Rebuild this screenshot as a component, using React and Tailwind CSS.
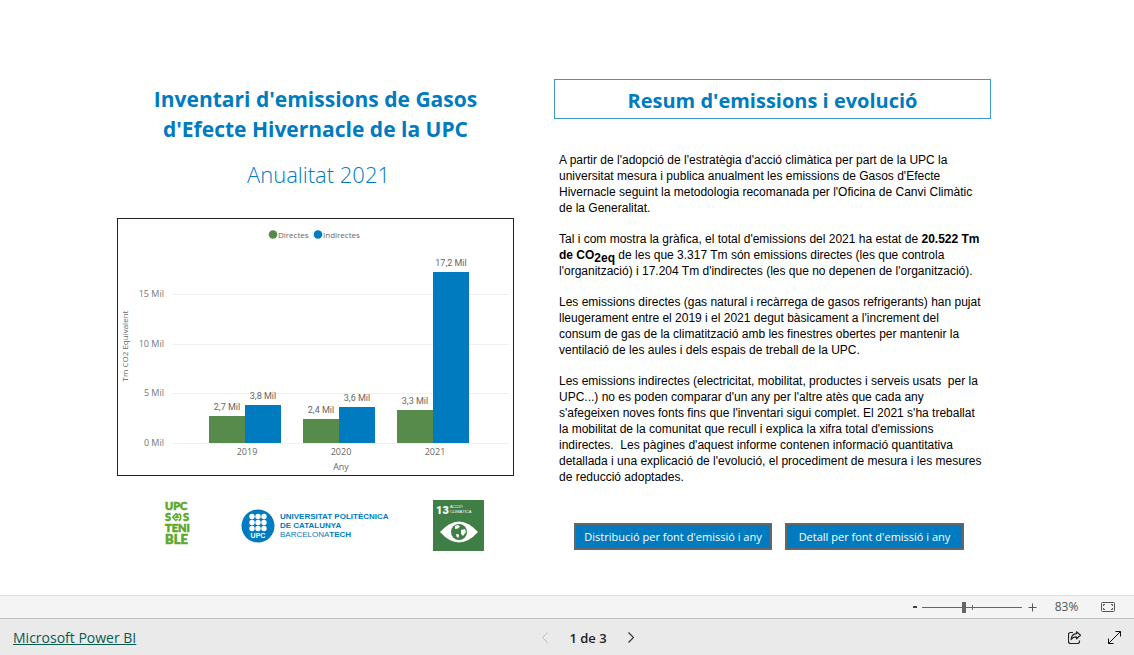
import { useState } from "react";

const SEGOE = "font-['Open_Sans','Noto_Sans',sans-serif]";

const years = [
  { year: "2019", x: 91, direct: { h: 27, label: "2,7 Mil" }, indirect: { h: 38, label: "3,8 Mil" } },
  { year: "2020", x: 185, direct: { h: 24, label: "2,4 Mil" }, indirect: { h: 36, label: "3,6 Mil" } },
  { year: "2021", x: 279, direct: { h: 33, label: "3,3 Mil" }, indirect: { h: 171, label: "17,2 Mil" } },
];

const ticks = [
  { y: 76, label: "15 Mil" },
  { y: 126, label: "10 Mil" },
  { y: 175, label: "5 Mil" },
  { y: 225, label: "0 Mil" },
];

function EmissionsChart() {
  return (
    <figure className="mt-[29px] border border-[#222]">
      <svg viewBox="0 0 395 256" className="block w-full fill-[#666] font-['Open_Sans',sans-serif] text-[9px]" role="img" aria-label="Emissions directes i indirectes per any">
        <circle cx="155" cy="15.5" r="4.3" fill="#568B4B" />
        <text x="160" y="19" className="text-[8px]">Directes</text>
        <circle cx="200" cy="15.5" r="4.3" fill="#007BC0" />
        <text x="205" y="19" className="text-[8px]">Indirectes</text>
        {ticks.map((t) => (
          <g key={t.label}>
            <path d={`M54 ${t.y - 0.5}H391`} stroke="#f0f0f0" />
            <text x="46" y={t.y + 2} textAnchor="end" fill="#777">{t.label}</text>
          </g>
        ))}
        {years.map((d) => (
          <g key={d.year}>
            <rect x={d.x} y={224 - d.direct.h} width="36" height={d.direct.h} fill="#568B4B" />
            <rect x={d.x + 36} y={224 - d.indirect.h} width="36" height={d.indirect.h} fill="#007BC0" />
            <g className="font-['Roboto',sans-serif]" textAnchor="middle">
              <text x={d.x + 18} y={218 - d.direct.h}>{d.direct.label}</text>
              <text x={d.x + 54} y={218 - d.indirect.h}>{d.indirect.label}</text>
            </g>
            <text x={d.x + 38} y="236" textAnchor="middle">{d.year}</text>
          </g>
        ))}
        <text x="223" y="251" textAnchor="middle">Any</text>
        <text transform="translate(10 127) rotate(-90)" textAnchor="middle" className="text-[8px]">Tm CO2 Equivalent</text>
      </svg>
    </figure>
  );
}

function SostenibleLogo() {
  return (
    <svg width="28" height="51" viewBox="0 0 28 51" className="overflow-visible fill-[#5BA829] stroke-[#5BA829] font-['Lato',sans-serif] text-[11px] font-black" strokeWidth="0.6" role="img" aria-label="UPC Sostenible">
      <text x="1" y="10">UPC</text>
      <text x="1" y="21">S</text>
      <path d="M12 13.5 8.8 17.2l3 3.3 1.8-1.5M12 13.5l1.8 1.6-2 2.1h3.400M14.500 13.800c3 .500 3 6.200 0 6.800" fill="none" strokeWidth="1.5" />
      <text x="19" y="21">S</text>
      <text x="1" y="32">TENI</text>
      <text x="1" y="44" className="text-[13px]">BLE</text>
    </svg>
  );
}

function UpcLogo() {
  return (
    <svg width="152" height="34" viewBox="0 0 152 34" className="ml-[9px] fill-[#007BC0] font-['Liberation_Sans',sans-serif] text-[8px]" role="img" aria-label="Universitat Politècnica de Catalunya BarcelonaTech">
      <circle cx="17" cy="17" r="16.5" />
      {[7.5, 13.5, 19.5].map((y) =>
        [11, 17, 23].map((x) => <circle key={`${x}-${y}`} cx={x} cy={y} r="2.7" fill="#fff" />)
      )}
      <text x="17" y="29" textAnchor="middle" fill="#fff" className="text-[7px] font-bold">UPC</text>
      <text x="39" y="10" className="font-bold">UNIVERSITAT POLITÈCNICA</text>
      <text x="39" y="19" className="font-bold">DE CATALUNYA</text>
      <text x="39" y="28">BARCELONA<tspan className="font-bold">TECH</tspan></text>
    </svg>
  );
}

function ClimateLogo() {
  return (
    <svg width="51" height="51" viewBox="0 0 51 51" className="font-['Liberation_Sans',sans-serif]" role="img" aria-label="13 Acció climàtica">
      <rect width="51" height="51" fill="#3F7E44" />
      <g fill="#fff">
        <text x="3" y="14" className="font-['Roboto',sans-serif] text-[11px] font-black">13</text>
        <text x="17" y="8" className="text-[4px]">ACCIÓ</text>
        <text x="17" y="13" className="text-[4px]">CLIMÀTICA</text>
        <path d="M7 32Q26 11 45 32Q26 53 7 32Z" />
      </g>
      <circle cx="26" cy="32" r="8" fill="#3F7E44" />
      <path d="M22 26l3-1 2 1.5-2 2-3 .5zM28 30l4-1 1 3-3 4-2-2zM23 34l3 .5-.5 3.5-2-1.5z" fill="#fff" />
    </svg>
  );
}

function ReportButton({ children, className }) {
  return (
    <button type="button" className={`${SEGOE} h-[27px] border-2 border-[#666] bg-[#007BC0] text-[11px] leading-4 whitespace-nowrap text-white ${className}`}>
      {children}
    </button>
  );
}

function ZoomBar() {
  const [zoom, setZoom] = useState(83);
  return (
    <div className="flex h-[24px] shrink-0 items-center justify-end border-y border-t-[#dedede] border-b-[#c0c0c0] bg-[#f4f4f4] pr-[19px] text-[#555]">
      <button type="button" aria-label="Allunya" className="grid h-5 w-[14px] place-items-center">
        <svg width="4" height="2"><path d="M0 1H4" stroke="#444" strokeWidth="2" /></svg>
      </button>
      <div className="relative flex h-5 w-[100px] items-center">
        <span className="absolute top-[8px] left-1/2 h-[5px] w-px bg-[#666]" />
        <input
          type="range"
          min="0"
          max="200"
          value={zoom}
          onChange={(e) => setZoom(Number(e.target.value))}
          aria-label="Zoom"
          className="relative h-[11px] w-full appearance-none bg-transparent [&::-webkit-slider-runnable-track]:h-[11px] [&::-webkit-slider-runnable-track]:bg-[linear-gradient(#666,#666)] [&::-webkit-slider-runnable-track]:bg-[length:100%_1px] [&::-webkit-slider-runnable-track]:bg-center [&::-webkit-slider-runnable-track]:bg-no-repeat [&::-webkit-slider-thumb]:h-[11px] [&::-webkit-slider-thumb]:w-[4px] [&::-webkit-slider-thumb]:appearance-none [&::-webkit-slider-thumb]:bg-[#666]"
        />
      </div>
      <button type="button" aria-label="Apropa" className="grid h-5 w-5 place-items-center">
        <svg width="9" height="9"><path d="M.5 4.5H8.5M4.5 .5V8.5" stroke="#555" /></svg>
      </button>
      <output className="w-[49px] text-center text-xs leading-4">{zoom}%</output>
      <button type="button" aria-label="Ajusta a la pàgina" className="ml-[10px]">
        <svg width="14" height="10" viewBox="0 0 14 10" fill="none" stroke="#555">
          <rect x=".5" y=".5" width="13" height="9" rx="1" />
          <path d="M2.5 4V2.5H4M10 2.5H11.5V4M11.5 6V7.5H10M4 7.5H2.5V6" />
        </svg>
      </button>
    </div>
  );
}

function Footer() {
  return (
    <footer className="grid h-[37px] shrink-0 grid-cols-3 items-center bg-[#eaeaea] px-[13px]">
      <a href="https://powerbi.microsoft.com" className="justify-self-start text-sm leading-5 text-[#0b5a50] underline">Microsoft Power BI</a>
      <nav aria-label="Pàgines" className="mr-[-42px] flex items-center justify-center">
        <button type="button" disabled aria-label="Pàgina anterior">
          <svg width="6" height="11" viewBox="0 0 6 11" fill="none" stroke="#bbb"><path d="M5.5 .5 .5 5.5 5.5 10.5" /></svg>
        </button>
        <span className="w-[80px] text-center text-[13px] leading-5 font-semibold text-[#222]">1 de 3</span>
        <button type="button" aria-label="Pàgina següent">
          <svg width="6" height="11" viewBox="0 0 6 11" fill="none" stroke="#333" strokeWidth="1.2"><path d="M.5 .5 5.5 5.5 .5 10.5" /></svg>
        </button>
      </nav>
      <div className="flex items-center justify-end gap-[27px]">
        <button type="button" aria-label="Comparteix">
          <svg width="13" height="13" viewBox="0 0 13 13" fill="none" stroke="#222" strokeWidth="1.2">
            <path d="M5 1.5H2.5a2 2 0 0 0-2 2v7a2 2 0 0 0 2 2h7a2 2 0 0 0 2-2V9.5" />
            <path d="M8.5 .8 12.5 4.3 8.5 7.8V5.8C6 5.8 4.5 6.5 3.2 8.5 3.4 5 5.5 2.8 8.5 2.7Z" strokeLinejoin="round" />
          </svg>
        </button>
        <button type="button" aria-label="Pantalla completa">
          <svg width="13" height="13" viewBox="0 0 13 13" fill="none" stroke="#111">
            <path d="M7.5 .5H12.5V5.5M12.5 .5 .5 12.5M.5 7.5V12.5H5.5" />
          </svg>
        </button>
      </div>
    </footer>
  );
}

export default function App() {
  return (
    <div className={`${SEGOE} flex min-h-screen flex-col bg-white`}>
      <main className="grid flex-1 grid-cols-[397fr_437fr] content-start gap-x-10 pt-[79px] pr-[143px] pb-11 pl-[117px]">
        <section className="text-center text-[#007BC0]">
          <h1 className="pt-[5px] text-[21px] leading-[30px] font-bold">
            Inventari d'emissions de Gasos<br />d'Efecte Hivernacle de la UPC
          </h1>
          <p className="mt-[15px] pl-[6px] text-[22px] leading-[30px] font-light">Anualitat 2021</p>
          <EmissionsChart />
          <div className="mt-6 flex items-center justify-between pr-[30px] pl-[47px]">
            <SostenibleLogo />
            <UpcLogo />
            <ClimateLogo />
          </div>
        </section>
        <section>
          <h2 className="h-[40px] border border-[#3d98cb] pt-[6px] text-center text-[20px] leading-[30px] font-bold text-[#007BC0]">
            Resum d'emissions i evolució
          </h2>
          <div className="mt-[33px] flex flex-col gap-[15px] pl-[5px] font-['Liberation_Sans',Arial,sans-serif] text-xs leading-4 whitespace-nowrap text-black">
            <p>
              A partir de l'adopció de l'estratègia d'acció climàtica per part de la UPC la<br />
              universitat mesura i publica anualment les emissions de Gasos d'Efecte<br />
              Hivernacle seguint la metodologia recomanada per l'Oficina de Canvi Climàtic<br />
              de la Generalitat.
            </p>
            <p>
              Tal i com mostra la gràfica, el total d'emissions del 2021 ha estat de <b>20.522 Tm<br />
              de CO<sub className="text-xs leading-none">2eq</sub></b> de les que 3.317 Tm són emissions directes (les que controla<br />
              l'organització) i 17.204 Tm d'indirectes (les que no depenen de l'organització).
            </p>
            <p>
              Les emissions directes (gas natural i recàrrega de gasos refrigerants) han pujat<br />
              lleugerament entre el 2019 i el 2021 degut bàsicament a l'increment del<br />
              consum de gas de la climatització amb les finestres obertes per mantenir la<br />
              ventilació de les aules i dels espais de treball de la UPC.
            </p>
            <p>
              Les emissions indirectes (electricitat, mobilitat, productes i serveis usats&nbsp; per la<br />
              UPC...) no es poden comparar d'un any per l'altre atès que cada any<br />
              s'afegeixen noves fonts fins que l'inventari sigui complet. El 2021 s'ha treballat<br />
              la mobilitat de la comunitat que recull i explica la xifra total d'emissions<br />
              indirectes.&nbsp; Les pàgines d'aquest informe contenen informació quantitativa<br />
              detallada i una explicació de l'evolució, el procediment de mesura i les mesures<br />
              de reducció adoptades.
            </p>
          </div>
          <div className="mt-[38px] flex gap-[13px] pl-5">
            <ReportButton className="w-[198px]">Distribució per font d'emissió i any</ReportButton>
            <ReportButton className="w-[179px]">Detall per font d'emissió i any</ReportButton>
          </div>
        </section>
      </main>
      <ZoomBar />
      <Footer />
    </div>
  );
}
